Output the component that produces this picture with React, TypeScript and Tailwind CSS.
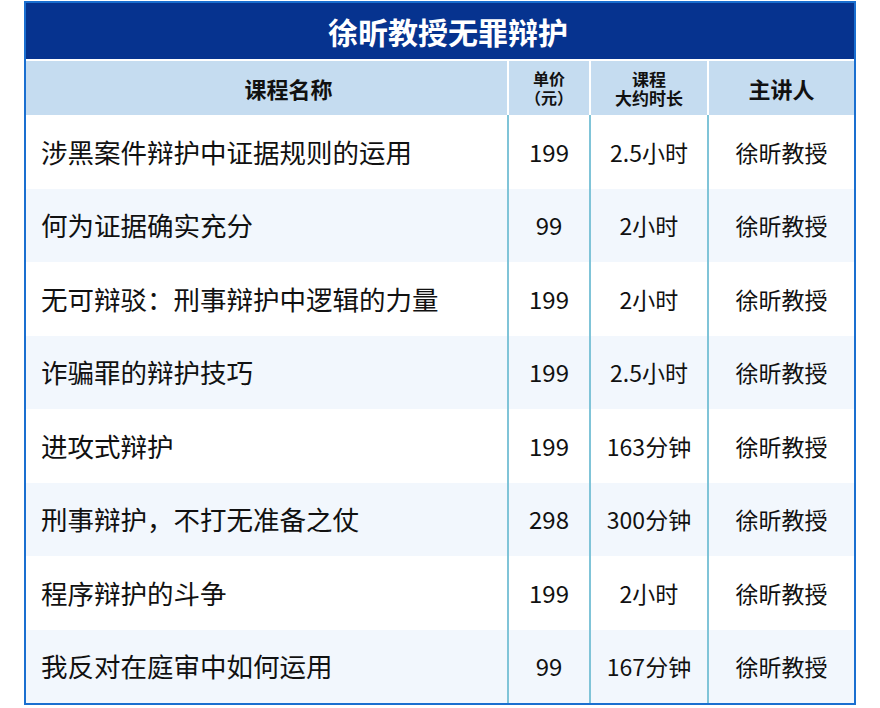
const rows = [
  { name: "涉黑案件辩护中证据规则的运用", price: "199", time: "2.5小时" },
  { name: "何为证据确实充分", price: "99", time: "2小时" },
  { name: "无可辩驳：刑事辩护中逻辑的力量", price: "199", time: "2小时" },
  { name: "诈骗罪的辩护技巧", price: "199", time: "2.5小时" },
  { name: "进攻式辩护", price: "199", time: "163分钟" },
  { name: "刑事辩护，不打无准备之仗", price: "298", time: "300分钟" },
  { name: "程序辩护的斗争", price: "199", time: "2小时" },
  { name: "我反对在庭审中如何运用", price: "99", time: "167分钟" },
];

const font = { fontFamily: '"Noto Sans CJK SC", "Noto Sans", sans-serif' };

export default function App() {
  return (
    <div className="w-[880px] h-[708px] bg-white pt-px pl-6" style={font}>
      <div className="w-[832px] border-2 border-[#1a6fd0]">
        <div className="flex h-[56px] items-center justify-center bg-[#06338f] pl-4 text-[30px] font-bold leading-none text-white">
          徐昕教授无罪辩护
        </div>
        <div className="flex h-[56px] border-t-2 border-white bg-[#c5dcf0] font-bold text-[#111]">
          <div className="flex w-[481px] items-center justify-center pl-11 text-[22px]">课程名称</div>
          <div className="flex w-[82px] flex-col items-center justify-center border-l-2 border-white text-[16px] leading-[19px]">
            <span>单价</span>
            <span>（元）</span>
          </div>
          <div className="flex w-[118px] flex-col items-center justify-center border-l-2 border-white text-[17px] leading-[19px]">
            <span>课程</span>
            <span>大约时长</span>
          </div>
          <div className="flex w-[147px] items-center justify-center border-l-2 border-white text-[22px]">主讲人</div>
        </div>
        {rows.map((r, i) => (
          <div
            key={r.name}
            className={`flex h-[73.5px] text-[#111] ${i % 2 === 1 ? "bg-[#f2f7fd]" : "bg-white"}`}
          >
            <div className="flex w-[481px] items-center pl-[15px] text-[26.5px]">{r.name}</div>
            <div className="flex w-[82px] items-center justify-center border-l-2 border-[#80c4d8] text-[24px]">
              {r.price}
            </div>
            <div className="flex w-[118px] items-center justify-center border-l-2 border-[#80c4d8] text-[23px]">
              {r.time}
            </div>
            <div className="flex w-[147px] items-center justify-center border-l-2 border-[#80c4d8] text-[23px]">
              徐昕教授
            </div>
          </div>
        ))}
      </div>
    </div>
  );
}
